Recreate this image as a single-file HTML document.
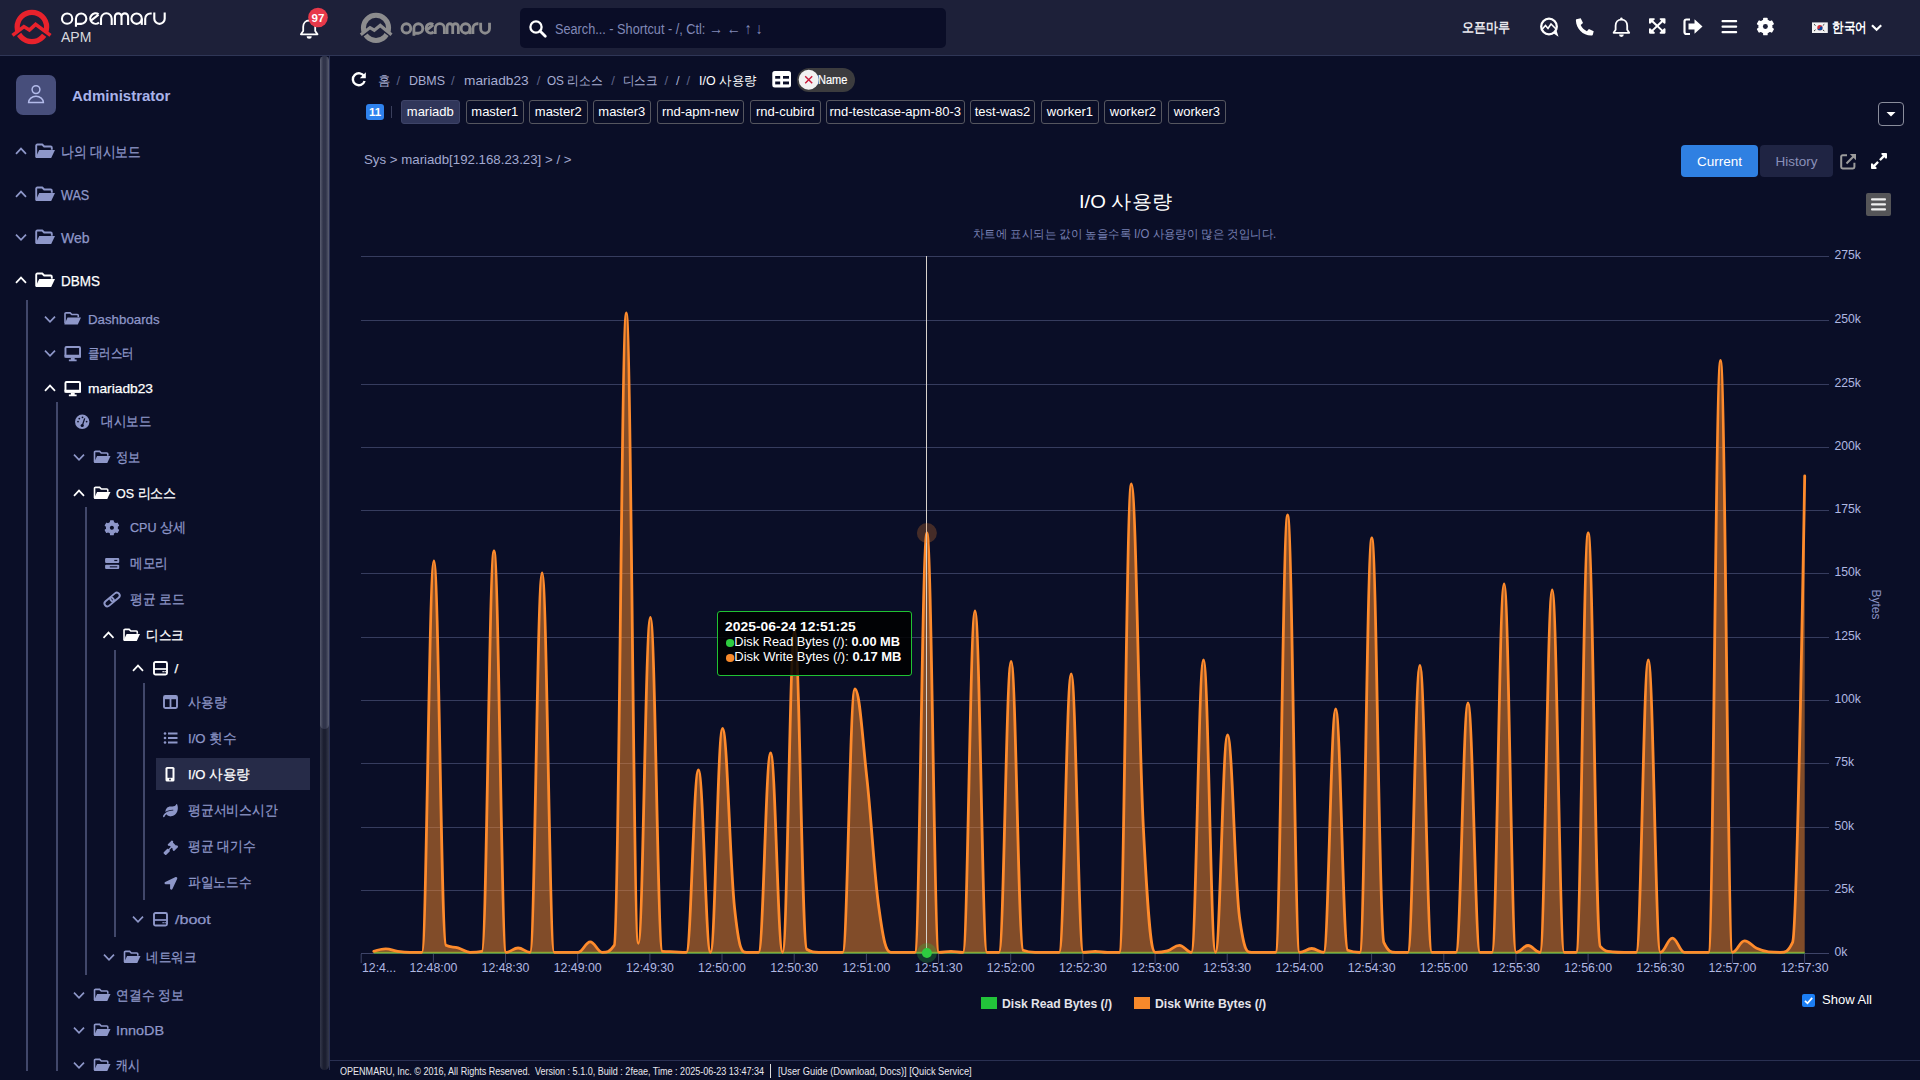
<!DOCTYPE html>
<html><head><meta charset="utf-8">
<style>
*{box-sizing:border-box}
html,body{margin:0;padding:0}
body{width:1920px;height:1080px;overflow:hidden;background:#0a0e27;font-family:"Liberation Sans",sans-serif;position:relative;color:#fff}
.a{position:absolute;white-space:nowrap}
#hdr{position:absolute;left:0;top:0;width:1920px;height:56px;background:#1d2039;border-bottom:1px solid #2f3656}
.t0{font-size:14.5px;color:#8e97c9;height:20px;line-height:20px}
.t1{font-size:13.5px;color:#8e97c9;height:20px;line-height:20px}
.w{color:#fff}
.vl{position:absolute;width:2px;background:#41476a}
.ic{position:absolute}
</style></head><body>
<!-- HEADER -->
<div id="hdr"></div>
<svg class="a" style="left:0;top:0" width="520" height="56" viewBox="0 0 520 56">
  <circle cx="31.9" cy="27" r="14.7" fill="none" stroke="#e8222c" stroke-width="5.3"/>
  <polyline points="11.5,38.6 23.9,28.6 29.4,32.6 35.6,27 51.5,38.6" fill="none" stroke="#1d2039" stroke-width="3.2"/>
  <polyline points="12.5,35.4 23.9,26.6 29.4,30.1 35.6,24.4 50.5,35.4" fill="none" stroke="#e8222c" stroke-width="3.6" stroke-linejoin="miter"/>
  <defs><g id="omtext">
    <circle cx="67.1" cy="18.65" r="5.15"/>
    <path d="M75.95 26.7 V18.65 A5.2 5.2 0 1 1 81.15 23.85 H77"/>
    <path d="M98.6 14.6 L90.6 20.8 M98.6 14.4 A5.2 5.2 0 1 0 99 22.4"/>
    <path d="M101 24.9 V18.65 A5.35 5.35 0 0 1 111.7 18.65 V24.9"/>
    <path d="M114.9 24.9 V16.7 A3.3 3.3 0 0 1 121.5 16.7 V24.9 M121.5 16.7 A3.3 3.3 0 0 1 128.1 16.7 V24.9"/>
    <circle cx="136.6" cy="18.65" r="5.2"/>
    <path d="M141.8 18.65 V24.9"/>
    <path d="M145.2 24.9 V18.65 A5.2 5.2 0 0 1 150.4 13.45 H151.7"/>
    <path d="M154.3 12.4 V18.65 A5.2 5.2 0 0 0 164.7 18.65 V12.4"/>
  </g></defs>
  <use href="#omtext" fill="none" stroke="#fff" stroke-width="2.1"/>
  <text x="61" y="41.5" font-family="Liberation Sans" font-size="14" fill="#d9d9de">APM</text>
  <!-- bell -->
  <path d="M309.2 20.5 c-3.6 0 -6 2.8 -6 6.3 v4.2 l-2.3 3.3 h16.6 l-2.3 -3.3 v-4.2 c0 -3.5 -2.4 -6.3 -6 -6.3z" fill="none" stroke="#fff" stroke-width="1.8" stroke-linejoin="round"/>
  <path d="M306.7 36.2 h5 a2.5 2.5 0 0 1 -5 0z" fill="#fff"/>
  <circle cx="318" cy="17.5" r="9.8" fill="#e8394a"/>
  <text x="318" y="21.6" font-family="Liberation Sans" font-size="11.5" font-weight="bold" fill="#fff" text-anchor="middle">97</text>
  <!-- gray logo -->
  <circle cx="376" cy="27.85" r="12.6" fill="none" stroke="#8c8c8e" stroke-width="5"/>
  <polyline points="359.5,37.6 370,30 374.3,32.4 380.2,27.8 392.8,37.4" fill="none" stroke="#1d2039" stroke-width="3"/>
  <polyline points="360.8,34.8 370,27.6 374.3,30.2 380.2,25.4 391.5,34.8" fill="none" stroke="#8c8c8e" stroke-width="3.2"/>
  <use href="#omtext" transform="translate(349.2 11.6) scale(0.852 0.904)" fill="none" stroke="#8c8c8e" stroke-width="3.3"/>
</svg>
<!-- search -->
<div class="a" style="left:520px;top:8px;width:426px;height:40px;background:#0a0d27;border-radius:5px"></div>
<svg class="a" style="left:528px;top:19px" width="20" height="20" viewBox="0 0 20 20"><circle cx="8" cy="8" r="5.6" fill="none" stroke="#fff" stroke-width="2.3"/><path d="M12 12 L17.3 17.3" stroke="#fff" stroke-width="2.8" stroke-linecap="round"/></svg>
<div id="t27" class="a" style="left:555px;top:19.0px;height:20px;line-height:20px;font-size:14px;color:#8189b7;transform:scaleX(0.9073);transform-origin:0 50%;">Search... - Shortcut - /, Ctl: <span style="font-size:15.5px">→ ← ↑ ↓</span></div><div id="t28" class="a" style="left:1462px;top:17.0px;height:20px;line-height:20px;font-size:14px;color:#e9e9ee;font-weight:bold;transform:scaleX(0.8571);transform-origin:0 50%;">오픈마루</div><div id="t29" class="a" style="left:1831.5px;top:17.0px;height:20px;line-height:20px;font-size:14px;color:#fff;font-weight:bold;transform:scaleX(0.8286);transform-origin:0 50%;">한국어</div>
<!-- header right icons -->
<svg class="a" style="left:1530px;top:10px" width="370" height="36" viewBox="1530 10 370 36">
  <g fill="#fff" stroke="#fff">
    <!-- chat openmaru -->
    <circle cx="1549" cy="26.5" r="7.8" fill="none" stroke-width="2.3"/>
    <path d="M1553 33 L1558.5 36.7 L1556.5 30.5z" stroke="none"/>
    <polyline points="1541.5,30 1545.5,25.5 1548,28.5 1551,24 1556.5,29.5" fill="none" stroke-width="1.6"/>
    <!-- phone -->
    <path d="M1577.5 19 l3.2 -0.8 l2.3 4.8 l-2.3 2 c1.2 2.8 3.5 5 6.2 6.2 l2 -2.3 l4.8 2.3 l-0.8 3.2 c-0.3 0.8 -1 1.2 -1.8 1.2 c-8.3 -0.3 -14.9 -7 -15.2 -15.2 c0 -0.8 0.5 -1.5 1.6 -1.4z" stroke="none"/>
    <!-- bell outline -->
    <path d="M1621.4 19.6 c-3.6 0 -5.8 2.8 -5.8 6.2 v4 l-2 3 h15.6 l-2 -3 v-4 c0 -3.4 -2.2 -6.2 -5.8 -6.2z" fill="none" stroke-width="1.8" stroke-linejoin="round"/>
    <path d="M1619 34.6 h4.8 a2.4 2.4 0 0 1 -4.8 0z" stroke="none"/>
    <circle cx="1621.4" cy="18.6" r="1.2" stroke="none"/>
    <!-- expand -->
    <path transform="translate(1649 18.2) scale(0.0368 0.0345) translate(0 -32)" d="M448 344v112a23.94 23.94 0 0 1-24 24H312c-21.39 0-32.09-25.9-17-41l36.2-36.2L224 295.6 116.77 402.9 153 439c15.09 15.1 4.39 41-17 41H24a23.94 23.94 0 0 1-24-24V344c0-21.4 25.89-32.1 41-17l36.19 36.2L184.46 256 77.18 148.7 41 185c-15.1 15.1-41 4.4-41-17V56a23.94 23.94 0 0 1 24-24h112c21.39 0 32.09 25.9 17 41l-36.2 36.2L224 216.4l107.23-107.3L295 73c-15.09-15.1-4.39-41 17-41h112a23.94 23.94 0 0 1 24 24v112c0 21.4-25.89 32.1-41 17l-36.19-36.2L263.54 256l107.28 107.3L407 327.1c15.1-15.2 41-4.5 41 16.9z" stroke="none"/>
    <!-- sign out -->
    <path d="M1690 19.5 h-3.5 a2 2 0 0 0 -2 2 v10.5 a2 2 0 0 0 2 2 h3.5" fill="none" stroke-width="2.2"/>
    <path d="M1688.5 23.5 h6 v-4.3 l8 7.3 l-8 7.3 v-4.3 h-6z" stroke="none"/>
    <!-- bars -->
    <rect x="1721.5" y="20" width="15.7" height="2.3" rx="1" stroke="none"/>
    <rect x="1721.5" y="25.4" width="15.7" height="2.3" rx="1" stroke="none"/>
    <rect x="1721.5" y="30.9" width="15.7" height="2.3" rx="1" stroke="none"/>
  </g>
  <!-- gear -->
  <g transform="translate(1765.4 26.5) scale(1.18)"><path d="M-2.41 -4.83 L-1.44 -5.20 L-1.32 -6.87 L1.32 -6.87 L1.44 -5.20 L2.98 -4.51 L3.79 -3.85 L5.29 -4.58 L6.61 -2.29 L5.23 -1.36 L5.39 0.32 L5.23 1.36 L6.61 2.29 L5.29 4.58 L3.79 3.85 L2.41 4.83 L1.44 5.20 L1.32 6.87 L-1.32 6.87 L-1.44 5.20 L-2.98 4.51 L-3.79 3.85 L-5.29 4.58 L-6.61 2.29 L-5.23 1.36 L-5.39 -0.32 L-5.23 -1.36 L-6.61 -2.29 L-5.29 -4.58 L-3.79 -3.85z M0 -2.1 a2.1 2.1 0 1 0 0.01 0z" fill="#fff" fill-rule="evenodd" stroke="#fff" stroke-width="1.2" stroke-linejoin="round"/><circle r="2.1" fill="#1d2039"/></g>
  <!-- flag -->
  <rect x="1812" y="22.4" width="15.8" height="10.6" fill="#f2f2f2"/>
  <circle cx="1819.9" cy="27.7" r="2.6" fill="#cd2e3a"/>
  <path d="M1817.3 27.7 a2.6 2.6 0 0 0 5.2 0 a1.3 1.3 0 0 0 -2.6 0 a1.3 1.3 0 0 1 -2.6 0z" fill="#0047a0"/>
  <g stroke="#333" stroke-width="1"><path d="M1814 24.3 l1.5 1.2 M1824.3 24.3 l-1.5 1.2 M1814 31 l1.5 -1.2 M1824.3 31 l-1.5 -1.2"/></g>
  <polyline points="1872,25.2 1876.6,29.8 1881.2,25.2" fill="none" stroke="#fff" stroke-width="2.2"/>
</svg>

<!-- SIDEBAR -->
<div class="a" style="left:320px;top:56px;width:9px;height:1014px;background:linear-gradient(to right,#34384b,#1b1e30 40%,#1b1e30 60%,#34384b);border-radius:5px"></div>
<div class="a" style="left:320px;top:56px;width:9px;height:673px;background:linear-gradient(to right,#5b5f72,#30344a 35%,#30344a 65%,#5b5f72);border-radius:5px"></div>
<div class="a" style="left:329px;top:56px;width:1px;height:1014px;background:#2a3052"></div>
<div class="vl" style="left:26px;top:300px;height:770.5px"></div><div class="vl" style="left:56px;top:402px;height:668.5px"></div><div class="vl" style="left:85.2px;top:507px;height:468px"></div><div class="vl" style="left:114px;top:650px;height:287px"></div><div class="vl" style="left:143px;top:683px;height:217px"></div><div class="a" style="left:156px;top:758px;width:154px;height:32px;background:#262b48"></div><div class="a" style="left:16px;top:75px;width:40px;height:40px;background:#474e7b;border-radius:7px"></div><svg class="a" style="left:16px;top:75px" width="40" height="40"><circle cx="20" cy="14.6" r="3.9" fill="none" stroke="#b3bbea" stroke-width="1.5"/><path d="M12.6 27.6 a7.4 6.4 0 0 1 14.8 0z" fill="none" stroke="#b3bbea" stroke-width="1.5"/></svg><div class="a" style="left:72px;top:86px;height:20px;line-height:20px;font-size:15px;font-weight:bold;color:#a9b3ea">Administrator</div><svg class="a" style="left:0;top:0" width="330" height="1080"><polyline points="16,153.8 21,148.6 26,153.8" fill="none" stroke="#8e97c9" stroke-width="1.7"/><g transform="translate(35 143.5) scale(1.0)"><path d="M1.2 13.5 V2.2 Q1.2 1 2.4 1 H7.2 L9.2 3 H15.6 Q16.8 3 16.8 4.2 V6.2" fill="none" stroke="#8e97c9" stroke-width="1.9"/><path d="M0.4 14.6 L4.2 6.6 H20 L16.2 14.6z" fill="#8e97c9"/></g><polyline points="16,196.8 21,191.6 26,196.8" fill="none" stroke="#8e97c9" stroke-width="1.7"/><g transform="translate(35 186.5) scale(1.0)"><path d="M1.2 13.5 V2.2 Q1.2 1 2.4 1 H7.2 L9.2 3 H15.6 Q16.8 3 16.8 4.2 V6.2" fill="none" stroke="#8e97c9" stroke-width="1.9"/><path d="M0.4 14.6 L4.2 6.6 H20 L16.2 14.6z" fill="#8e97c9"/></g><polyline points="16,234.6 21,239.8 26,234.6" fill="none" stroke="#8e97c9" stroke-width="1.7"/><g transform="translate(35 229.5) scale(1.0)"><path d="M1.2 13.5 V2.2 Q1.2 1 2.4 1 H7.2 L9.2 3 H15.6 Q16.8 3 16.8 4.2 V6.2" fill="none" stroke="#8e97c9" stroke-width="1.9"/><path d="M0.4 14.6 L4.2 6.6 H20 L16.2 14.6z" fill="#8e97c9"/></g><polyline points="16,282.8 21,277.6 26,282.8" fill="none" stroke="#fff" stroke-width="1.7"/><g transform="translate(35 272.5) scale(1.0)"><path d="M1.2 13.5 V2.2 Q1.2 1 2.4 1 H7.2 L9.2 3 H15.6 Q16.8 3 16.8 4.2 V6.2" fill="none" stroke="#fff" stroke-width="1.9"/><path d="M0.4 14.6 L4.2 6.6 H20 L16.2 14.6z" fill="#fff"/></g><polyline points="45,316.6 50,321.8 55,316.6" fill="none" stroke="#8e97c9" stroke-width="1.7"/><g transform="translate(64 312) scale(0.85)"><path d="M1.2 13.5 V2.2 Q1.2 1 2.4 1 H7.2 L9.2 3 H15.6 Q16.8 3 16.8 4.2 V6.2" fill="none" stroke="#8e97c9" stroke-width="1.9"/><path d="M0.4 14.6 L4.2 6.6 H20 L16.2 14.6z" fill="#8e97c9"/></g><polyline points="45,350.6 50,355.8 55,350.6" fill="none" stroke="#8e97c9" stroke-width="1.7"/><g transform="translate(64.5 346) scale(0.9705882352941176)"><rect x="1" y="1" width="15" height="10" rx="1" fill="none" stroke="#8e97c9" stroke-width="2"/><rect x="0" y="9" width="17" height="3" fill="#8e97c9"/><path d="M6.5 12 v2 h-2 v1.6 h8 v-1.6 h-2 v-2z" fill="#8e97c9"/></g><polyline points="45,390.8 50,385.6 55,390.8" fill="none" stroke="#fff" stroke-width="1.7"/><g transform="translate(64.5 381) scale(0.9705882352941176)"><rect x="1" y="1" width="15" height="10" rx="1" fill="none" stroke="#fff" stroke-width="2"/><rect x="0" y="9" width="17" height="3" fill="#fff"/><path d="M6.5 12 v2 h-2 v1.6 h8 v-1.6 h-2 v-2z" fill="#fff"/></g><g transform="translate(75 414.6)"><circle cx="7.2" cy="7.2" r="7.2" fill="#8e97c9"/><path d="M7.3 11 L9.7 3.8" stroke="#0a0e27" stroke-width="1.3"/><circle cx="7.2" cy="10.9" r="1.6" fill="#0a0e27"/><circle cx="4.3" cy="4" r="0.9" fill="#0a0e27"/><circle cx="7.5" cy="2.7" r="0.9" fill="#0a0e27"/><circle cx="3" cy="7" r="0.9" fill="#0a0e27"/><circle cx="11.6" cy="7" r="0.9" fill="#0a0e27"/></g><polyline points="74,454.6 79,459.8 84,454.6" fill="none" stroke="#8e97c9" stroke-width="1.7"/><g transform="translate(93.5 450.5) scale(0.85)"><path d="M1.2 13.5 V2.2 Q1.2 1 2.4 1 H7.2 L9.2 3 H15.6 Q16.8 3 16.8 4.2 V6.2" fill="none" stroke="#8e97c9" stroke-width="1.9"/><path d="M0.4 14.6 L4.2 6.6 H20 L16.2 14.6z" fill="#8e97c9"/></g><polyline points="74,495.8 79,490.6 84,495.8" fill="none" stroke="#fff" stroke-width="1.7"/><g transform="translate(93.5 486.5) scale(0.85)"><path d="M1.2 13.5 V2.2 Q1.2 1 2.4 1 H7.2 L9.2 3 H15.6 Q16.8 3 16.8 4.2 V6.2" fill="none" stroke="#fff" stroke-width="1.9"/><path d="M0.4 14.6 L4.2 6.6 H20 L16.2 14.6z" fill="#fff"/></g><g transform="translate(111.89999999999999 527.8000000000001)"><path d="M-2.41 -4.83 L-1.44 -5.20 L-1.32 -6.87 L1.32 -6.87 L1.44 -5.20 L2.98 -4.51 L3.79 -3.85 L5.29 -4.58 L6.61 -2.29 L5.23 -1.36 L5.39 0.32 L5.23 1.36 L6.61 2.29 L5.29 4.58 L3.79 3.85 L2.41 4.83 L1.44 5.20 L1.32 6.87 L-1.32 6.87 L-1.44 5.20 L-2.98 4.51 L-3.79 3.85 L-5.29 4.58 L-6.61 2.29 L-5.23 1.36 L-5.39 -0.32 L-5.23 -1.36 L-6.61 -2.29 L-5.29 -4.58 L-3.79 -3.85z M0 -2.1 a2.1 2.1 0 1 0 0.01 0z" fill="#8e97c9" fill-rule="evenodd" stroke="#8e97c9" stroke-width="1.2" stroke-linejoin="round"/><circle r="2" fill="#0a0e27"/></g><g transform="translate(104.8 555.5)"><rect x="0.3" y="2.6" width="14.1" height="4.9" rx="1" fill="#8e97c9"/><rect x="0.3" y="9.2" width="14.1" height="4.4" rx="1" fill="#8e97c9"/><rect x="9.5" y="4.4" width="3" height="1.2" fill="#0a0e27"/><rect x="5" y="10.8" width="7.5" height="1.1" fill="#0a0e27"/></g><g transform="translate(112.1 599.5) rotate(-40)" fill="none" stroke="#8e97c9" stroke-width="1.9"><rect x="-9" y="-2.9" width="10.5" height="5.8" rx="2.9"/><rect x="-1.5" y="-2.9" width="10.5" height="5.8" rx="2.9"/></g><polyline points="103.5,637.8 108.5,632.6 113.5,637.8" fill="none" stroke="#fff" stroke-width="1.7"/><g transform="translate(123 628.5) scale(0.85)"><path d="M1.2 13.5 V2.2 Q1.2 1 2.4 1 H7.2 L9.2 3 H15.6 Q16.8 3 16.8 4.2 V6.2" fill="none" stroke="#fff" stroke-width="1.9"/><path d="M0.4 14.6 L4.2 6.6 H20 L16.2 14.6z" fill="#fff"/></g><polyline points="133,670.8 138,665.6 143,670.8" fill="none" stroke="#fff" stroke-width="1.7"/><g transform="translate(153 661)"><rect x="1" y="1" width="13" height="12.5" rx="1.5" fill="none" stroke="#fff" stroke-width="1.9"/><path d="M1 8 H14" stroke="#fff" stroke-width="1.7"/><rect x="9.5" y="10" width="1.3" height="1.3" fill="#fff"/><rect x="11.5" y="10" width="1.3" height="1.3" fill="#fff"/></g><g transform="translate(163 695)"><rect x="1" y="1" width="13" height="12" rx="1.2" fill="none" stroke="#8e97c9" stroke-width="1.9"/><rect x="1" y="1" width="13" height="3.2" fill="#8e97c9"/><path d="M7.5 3 V13" stroke="#8e97c9" stroke-width="1.8"/></g><g transform="translate(163.5 730.5)" fill="#8e97c9"><circle cx="1.5" cy="3" r="1.3"/><circle cx="1.5" cy="7.5" r="1.3"/><circle cx="1.5" cy="12" r="1.3"/><rect x="4.5" y="2" width="9.5" height="2"/><rect x="4.5" y="6.5" width="9.5" height="2"/><rect x="4.5" y="11" width="9.5" height="2"/></g><g transform="translate(162.5 766.5)"><rect x="3" y="0.5" width="9" height="14.5" rx="1.6" fill="#fff"/><rect x="5" y="2.3" width="5" height="9" fill="#262b48"/><circle cx="7.5" cy="13" r="0.9" fill="#262b48"/></g><g transform="translate(163 804.0) scale(0.0258)"><path d="M546.2 9.7c-5.6-12.5-21.6-13-28.3-1.2C486.9 62.4 431.4 96 368 96h-80C182 96 96 182 96 288c0 7 .8 13.7 1.5 20.5C161.3 262.8 253.4 224 384 224c8.8 0 16 7.2 16 16s-7.2 16-16 16C132.6 256 26 410.1 2.4 468c-6.6 16.3 1.2 34.9 17.5 41.6 16.4 6.8 35-1.1 41.8-17.3 1.5-3.6 20.9-47.9 71.9-90.6 32.4 43.9 94 85.8 174.9 77.2C465.5 467.5 576 326.7 576 154.3c0-50.2-10.8-102.2-29.8-144.6z" fill="#8e97c9"/></g><g transform="translate(163.5 840.5) scale(0.0285)"><path d="M504.971 199.362l-22.627-22.627c-9.373-9.373-24.569-9.373-33.941 0l-5.657 5.657L329.608 69.255l5.657-5.657c9.373-9.373 9.373-24.569 0-33.941L312.638 7.029c-9.373-9.373-24.569-9.373-33.941 0L154.246 131.48c-9.373 9.373-9.373 24.569 0 33.941l22.627 22.627c9.373 9.373 24.569 9.373 33.941 0l5.657-5.657 39.598 39.598-81.04 81.04-5.657-5.657c-12.497-12.497-32.758-12.497-45.255 0L9.373 412.118c-12.497 12.497-12.497 32.758 0 45.255l45.255 45.255c12.497 12.497 32.758 12.497 45.255 0l114.745-114.745c12.497-12.497 12.497-32.758 0-45.255l-5.657-5.657 81.04-81.04 39.598 39.598-5.657 5.657c-9.373 9.373-9.373 24.569 0 33.941l22.627 22.627c9.373 9.373 24.569 9.373 33.941 0l124.451-124.451c9.372-9.372 9.372-24.568 0-33.941z" fill="#8e97c9"/></g><g transform="translate(164.5 877.0) scale(0.025)"><path d="M444.52 3.52L28.74 195.42c-47.97 22.39-31.98 92.75 19.19 92.75h175.91v175.91c0 51.17 70.36 67.17 92.75 19.19l191.9-415.78c15.99-38.39-25.59-79.97-63.97-63.97z" fill="#8e97c9"/></g><polyline points="133,916.6 138,921.8 143,916.6" fill="none" stroke="#8e97c9" stroke-width="1.7"/><g transform="translate(153 912)"><rect x="1" y="1" width="13" height="12.5" rx="1.5" fill="none" stroke="#8e97c9" stroke-width="1.9"/><path d="M1 8 H14" stroke="#8e97c9" stroke-width="1.7"/><rect x="9.5" y="10" width="1.3" height="1.3" fill="#8e97c9"/><rect x="11.5" y="10" width="1.3" height="1.3" fill="#8e97c9"/></g><polyline points="104,954.6 109,959.8 114,954.6" fill="none" stroke="#8e97c9" stroke-width="1.7"/><g transform="translate(123.5 950.5) scale(0.85)"><path d="M1.2 13.5 V2.2 Q1.2 1 2.4 1 H7.2 L9.2 3 H15.6 Q16.8 3 16.8 4.2 V6.2" fill="none" stroke="#8e97c9" stroke-width="1.9"/><path d="M0.4 14.6 L4.2 6.6 H20 L16.2 14.6z" fill="#8e97c9"/></g><polyline points="74,992.6 79,997.8 84,992.6" fill="none" stroke="#8e97c9" stroke-width="1.7"/><g transform="translate(93.5 988.5) scale(0.85)"><path d="M1.2 13.5 V2.2 Q1.2 1 2.4 1 H7.2 L9.2 3 H15.6 Q16.8 3 16.8 4.2 V6.2" fill="none" stroke="#8e97c9" stroke-width="1.9"/><path d="M0.4 14.6 L4.2 6.6 H20 L16.2 14.6z" fill="#8e97c9"/></g><polyline points="74,1027.6 79,1032.8 84,1027.6" fill="none" stroke="#8e97c9" stroke-width="1.7"/><g transform="translate(93.5 1023.5) scale(0.85)"><path d="M1.2 13.5 V2.2 Q1.2 1 2.4 1 H7.2 L9.2 3 H15.6 Q16.8 3 16.8 4.2 V6.2" fill="none" stroke="#8e97c9" stroke-width="1.9"/><path d="M0.4 14.6 L4.2 6.6 H20 L16.2 14.6z" fill="#8e97c9"/></g><polyline points="74,1062.6 79,1067.8 84,1062.6" fill="none" stroke="#8e97c9" stroke-width="1.7"/><g transform="translate(93.5 1058.5) scale(0.85)"><path d="M1.2 13.5 V2.2 Q1.2 1 2.4 1 H7.2 L9.2 3 H15.6 Q16.8 3 16.8 4.2 V6.2" fill="none" stroke="#8e97c9" stroke-width="1.9"/><path d="M0.4 14.6 L4.2 6.6 H20 L16.2 14.6z" fill="#8e97c9"/></g></svg><div id="t1" class="a" style="left:61px;top:142.0px;height:20px;line-height:20px;font-size:14.5px;color:#8e97c9;transform:scaleX(0.8476);transform-origin:0 50%;-webkit-text-stroke:0.25px #8e97c9;">나의 대시보드</div><div id="t2" class="a" style="left:61px;top:185.0px;height:20px;line-height:20px;font-size:14.5px;color:#8e97c9;transform:scaleX(0.8708);transform-origin:0 50%;-webkit-text-stroke:0.25px #8e97c9;">WAS</div><div id="t3" class="a" style="left:61px;top:228.0px;height:20px;line-height:20px;font-size:14.5px;color:#8e97c9;transform:scaleX(0.9674);transform-origin:0 50%;-webkit-text-stroke:0.25px #8e97c9;">Web</div><div id="t4" class="a" style="left:61px;top:271.0px;height:20px;line-height:20px;font-size:14.5px;color:#fff;transform:scaleX(0.9283);transform-origin:0 50%;-webkit-text-stroke:0.25px #fff;">DBMS</div><div id="t5" class="a" style="left:87.5px;top:310.0px;height:20px;line-height:20px;font-size:13.5px;color:#8e97c9;transform:scaleX(0.9836);transform-origin:0 50%;-webkit-text-stroke:0.25px #8e97c9;">Dashboards</div><div id="t6" class="a" style="left:87.5px;top:344.0px;height:20px;line-height:20px;font-size:13.5px;color:#8e97c9;transform:scaleX(0.8161);transform-origin:0 50%;-webkit-text-stroke:0.25px #8e97c9;">클러스터</div><div id="t7" class="a" style="left:87.5px;top:379.0px;height:20px;line-height:20px;font-size:13.5px;color:#fff;transform:scaleX(1.0189);transform-origin:0 50%;-webkit-text-stroke:0.25px #fff;">mariadb23</div><div id="t8" class="a" style="left:100.5px;top:412.0px;height:20px;line-height:20px;font-size:13.5px;color:#8e97c9;transform:scaleX(0.8929);transform-origin:0 50%;-webkit-text-stroke:0.25px #8e97c9;">대시보드</div><div id="t9" class="a" style="left:116px;top:448.0px;height:20px;line-height:20px;font-size:13.5px;color:#8e97c9;transform:scaleX(0.8750);transform-origin:0 50%;-webkit-text-stroke:0.25px #8e97c9;">정보</div><div id="t10" class="a" style="left:116px;top:484.0px;height:20px;line-height:20px;font-size:13.5px;color:#fff;transform:scaleX(0.9254);transform-origin:0 50%;-webkit-text-stroke:0.25px #fff;">OS 리소스</div><div id="t11" class="a" style="left:130px;top:518.0px;height:20px;line-height:20px;font-size:13.5px;color:#8e97c9;transform:scaleX(0.9309);transform-origin:0 50%;-webkit-text-stroke:0.25px #8e97c9;">CPU 상세</div><div id="t12" class="a" style="left:130px;top:554.0px;height:20px;line-height:20px;font-size:13.5px;color:#8e97c9;transform:scaleX(0.9000);transform-origin:0 50%;-webkit-text-stroke:0.25px #8e97c9;">메모리</div><div id="t13" class="a" style="left:130px;top:590.0px;height:20px;line-height:20px;font-size:13.5px;color:#8e97c9;transform:scaleX(0.9119);transform-origin:0 50%;-webkit-text-stroke:0.25px #8e97c9;">평균 로드</div><div id="t14" class="a" style="left:145.5px;top:626.0px;height:20px;line-height:20px;font-size:13.5px;color:#fff;transform:scaleX(0.8929);transform-origin:0 50%;-webkit-text-stroke:0.25px #fff;">디스크</div><div id="t15" class="a" style="left:174.5px;top:659.0px;height:20px;line-height:20px;font-size:13.5px;color:#fff;-webkit-text-stroke:0.25px #fff;">/</div><div id="t16" class="a" style="left:188px;top:693.0px;height:20px;line-height:20px;font-size:13.5px;color:#8e97c9;transform:scaleX(0.9143);transform-origin:0 50%;-webkit-text-stroke:0.25px #8e97c9;">사용량</div><div id="t17" class="a" style="left:188px;top:729.0px;height:20px;line-height:20px;font-size:13.5px;color:#8e97c9;transform:scaleX(0.9726);transform-origin:0 50%;-webkit-text-stroke:0.25px #8e97c9;">I/O 횟수</div><div id="t18" class="a" style="left:188px;top:765.0px;height:20px;line-height:20px;font-size:13.5px;color:#fff;transform:scaleX(0.9676);transform-origin:0 50%;-webkit-text-stroke:0.25px #fff;">I/O 사용량</div><div id="t19" class="a" style="left:188px;top:801.0px;height:20px;line-height:20px;font-size:13.5px;color:#8e97c9;transform:scaleX(0.9153);transform-origin:0 50%;-webkit-text-stroke:0.25px #8e97c9;">평균서비스시간</div><div id="t20" class="a" style="left:188px;top:837.0px;height:20px;line-height:20px;font-size:13.5px;color:#8e97c9;transform:scaleX(0.9151);transform-origin:0 50%;-webkit-text-stroke:0.25px #8e97c9;">평균 대기수</div><div id="t21" class="a" style="left:188px;top:873.0px;height:20px;line-height:20px;font-size:13.5px;color:#8e97c9;transform:scaleX(0.9057);transform-origin:0 50%;-webkit-text-stroke:0.25px #8e97c9;">파일노드수</div><div id="t22" class="a" style="left:174.5px;top:910.0px;height:20px;line-height:20px;font-size:13.5px;color:#8e97c9;transform:scaleX(1.1921);transform-origin:0 50%;-webkit-text-stroke:0.25px #8e97c9;">/boot</div><div id="t23" class="a" style="left:145.5px;top:948.0px;height:20px;line-height:20px;font-size:13.5px;color:#8e97c9;transform:scaleX(0.8929);transform-origin:0 50%;-webkit-text-stroke:0.25px #8e97c9;">네트워크</div><div id="t24" class="a" style="left:116px;top:986.0px;height:20px;line-height:20px;font-size:13.5px;color:#8e97c9;transform:scaleX(0.9123);transform-origin:0 50%;-webkit-text-stroke:0.25px #8e97c9;">연결수 정보</div><div id="t25" class="a" style="left:116px;top:1021.0px;height:20px;line-height:20px;font-size:13.5px;color:#8e97c9;transform:scaleX(1.0704);transform-origin:0 50%;-webkit-text-stroke:0.25px #8e97c9;">InnoDB</div><div id="t26" class="a" style="left:116px;top:1056.0px;height:20px;line-height:20px;font-size:13.5px;color:#8e97c9;transform:scaleX(0.8607);transform-origin:0 50%;-webkit-text-stroke:0.25px #8e97c9;">캐시</div>

<!-- MAIN -->
<!-- breadcrumb -->
<svg class="a" style="left:350px;top:70px" width="18" height="18" viewBox="0 0 18 18"><path d="M14.2 6.5 A6 6 0 1 0 14.6 11" fill="none" stroke="#fff" stroke-width="2.4"/><path d="M15.8 2.2 V8.2 H9.8z" fill="#fff"/></svg>
<svg class="a" style="left:772px;top:70px" width="20" height="18" viewBox="0 0 20 18"><rect x="0.3" y="0.9" width="18.7" height="16.6" rx="2.5" fill="#fff"/><rect x="3.2" y="6" width="5" height="2.7" fill="#0a0e27"/><rect x="11" y="6" width="6" height="2.7" fill="#0a0e27"/><rect x="3.2" y="11.5" width="5" height="2.9" fill="#0a0e27"/><rect x="11" y="11.5" width="6" height="2.9" fill="#0a0e27"/></svg>
<div class="a" style="left:797.3px;top:68px;width:57.5px;height:24px;border-radius:12px;background:#3c3c3e"></div>
<svg class="a" style="left:797px;top:68px;z-index:5" width="24" height="24" viewBox="0 0 24 24"><circle cx="11.7" cy="11.7" r="10" fill="#f2f2f2"/><path d="M8.2 8.2 L15.2 15.2 M15.2 8.2 L8.2 15.2" stroke="#c8193a" stroke-width="1.4"/></svg>
<!-- tags -->
<div class="a" style="left:366px;top:104px;width:18px;height:16px;border-radius:3px;background:#2f82ee"></div>
<div class="a" style="left:390.5px;top:106px;width:1px;height:12px;background:#3a3f5c"></div>
<div class="a" style="left:401px;top:100px;width:58.6px;height:24px;border:1px solid;background:#30365a;border-color:#3e4468;border-radius:3px;color:#fff;font-size:13px;line-height:22px;text-align:center">mariadb</div><div class="a" style="left:465.8px;top:100px;width:58.0px;height:24px;border:1px solid;border-color:#55565f;border-radius:3px;color:#fff;font-size:13px;line-height:22px;text-align:center">master1</div><div class="a" style="left:529px;top:100px;width:58.6px;height:24px;border:1px solid;border-color:#55565f;border-radius:3px;color:#fff;font-size:13px;line-height:22px;text-align:center">master2</div><div class="a" style="left:593px;top:100px;width:57.6px;height:24px;border:1px solid;border-color:#55565f;border-radius:3px;color:#fff;font-size:13px;line-height:22px;text-align:center">master3</div><div class="a" style="left:656.8px;top:100px;width:86.9px;height:24px;border:1px solid;border-color:#55565f;border-radius:3px;color:#fff;font-size:13px;line-height:22px;text-align:center">rnd-apm-new</div><div class="a" style="left:749.9px;top:100px;width:70.8px;height:24px;border:1px solid;border-color:#55565f;border-radius:3px;color:#fff;font-size:13px;line-height:22px;text-align:center">rnd-cubird</div><div class="a" style="left:825.8px;top:100px;width:138.8px;height:24px;border:1px solid;border-color:#55565f;border-radius:3px;color:#fff;font-size:13px;line-height:22px;text-align:center">rnd-testcase-apm-80-3</div><div class="a" style="left:970.3px;top:100px;width:64.4px;height:24px;border:1px solid;border-color:#55565f;border-radius:3px;color:#fff;font-size:13px;line-height:22px;text-align:center">test-was2</div><div class="a" style="left:1041.2px;top:100px;width:57.6px;height:24px;border:1px solid;border-color:#55565f;border-radius:3px;color:#fff;font-size:13px;line-height:22px;text-align:center">worker1</div><div class="a" style="left:1104.2px;top:100px;width:57.4px;height:24px;border:1px solid;border-color:#55565f;border-radius:3px;color:#fff;font-size:13px;line-height:22px;text-align:center">worker2</div><div class="a" style="left:1168.3px;top:100px;width:57.4px;height:24px;border:1px solid;border-color:#55565f;border-radius:3px;color:#fff;font-size:13px;line-height:22px;text-align:center">worker3</div>
<div class="a" style="left:1878px;top:102px;width:26px;height:24px;border:1px solid #8a8d9c;border-radius:4px"></div>
<svg class="a" style="left:1878px;top:102px" width="26" height="24"><path d="M8.5 10 H17.5 L13 14.6z" fill="#fff"/></svg>
<!-- sys path -->
<!-- buttons -->
<div class="a" style="left:1681px;top:145px;width:77px;height:32px;border-radius:4px;background:#2f80e2"></div>
<div class="a" style="left:1760px;top:145px;width:73px;height:32px;border-radius:4px;background:#1f2443"></div>
<svg class="a" style="left:1840px;top:153px" width="17" height="17" viewBox="0 0 17 17"><path d="M7 2.2 H2.6 a1.4 1.4 0 0 0 -1.4 1.4 V14 a1.4 1.4 0 0 0 1.4 1.4 H13 a1.4 1.4 0 0 0 1.4 -1.4 V9.8" fill="none" stroke="#9c9c9c" stroke-width="2"/><path d="M6.5 10.5 L14.2 2.8" stroke="#9c9c9c" stroke-width="2"/><path d="M9.8 1 H16 V7.2z" fill="#9c9c9c"/></svg>
<svg class="a" style="left:1871.3px;top:153px" width="16" height="16" viewBox="0 32 448 448"><path d="M212.686 315.314L120 408l32.922 31.029c15.12 15.12 4.412 40.971-16.97 40.971h-112C10.697 480 0 469.255 0 456V344c0-21.382 25.803-32.09 40.922-16.971L72 360l92.686-92.686c6.248-6.248 16.379-6.248 22.627 0l25.373 25.373c6.249 6.248 6.249 16.378 0 22.627zm22.628-118.628L328 104l-32.922-31.029C279.958 57.851 290.666 32 312.048 32h112C437.303 32 448 42.745 448 56v112c0 21.382-25.803 32.09-40.922 16.971L376 152l-92.686 92.686c-6.248 6.248-16.379 6.248-22.627 0l-25.373-25.373c-6.249-6.248-6.249-16.378 0-22.627z" fill="#fff"/></svg>
<!-- chart -->
<div class="a" style="left:1866px;top:193px;width:25px;height:22.5px;border-radius:2px;background:#555558"></div>
<svg class="a" style="left:1866px;top:193px" width="25" height="23"><g fill="#f0f0f0"><rect x="5" y="5.2" width="15" height="2.4" rx="1"/><rect x="5" y="10.2" width="15" height="2.4" rx="1"/><rect x="5" y="15.2" width="15" height="2.4" rx="1"/></g></svg>
<svg class="a" style="left:0;top:0" width="1920" height="1080" viewBox="0 0 1920 1080">
  <g stroke="#363c5e" stroke-width="1">
    <path d="M361 256.5 H1829"/><path d="M361 320.5 H1829"/><path d="M361 384.5 H1829"/><path d="M361 447.5 H1829"/><path d="M361 510.5 H1829"/><path d="M361 573.5 H1829"/><path d="M361 637.5 H1829"/><path d="M361 700.5 H1829"/><path d="M361 763.5 H1829"/><path d="M361 827.5 H1829"/><path d="M361 890.5 H1829"/>
  </g>
  <path d="M361 953.5 H1829" stroke="#3e4468" stroke-width="1"/>
  <path d="M361.2 954 V963" stroke="#3e4468" stroke-width="1"/><path d="M433.4 954 V963" stroke="#3e4468" stroke-width="1"/><path d="M505.5 954 V963" stroke="#3e4468" stroke-width="1"/><path d="M577.7 954 V963" stroke="#3e4468" stroke-width="1"/><path d="M649.9 954 V963" stroke="#3e4468" stroke-width="1"/><path d="M722.0 954 V963" stroke="#3e4468" stroke-width="1"/><path d="M794.2 954 V963" stroke="#3e4468" stroke-width="1"/><path d="M866.4 954 V963" stroke="#3e4468" stroke-width="1"/><path d="M938.6 954 V963" stroke="#3e4468" stroke-width="1"/><path d="M1010.7 954 V963" stroke="#3e4468" stroke-width="1"/><path d="M1082.9 954 V963" stroke="#3e4468" stroke-width="1"/><path d="M1155.1 954 V963" stroke="#3e4468" stroke-width="1"/><path d="M1227.2 954 V963" stroke="#3e4468" stroke-width="1"/><path d="M1299.4 954 V963" stroke="#3e4468" stroke-width="1"/><path d="M1371.6 954 V963" stroke="#3e4468" stroke-width="1"/><path d="M1443.8 954 V963" stroke="#3e4468" stroke-width="1"/><path d="M1515.9 954 V963" stroke="#3e4468" stroke-width="1"/><path d="M1588.1 954 V963" stroke="#3e4468" stroke-width="1"/><path d="M1660.3 954 V963" stroke="#3e4468" stroke-width="1"/><path d="M1732.4 954 V963" stroke="#3e4468" stroke-width="1"/><path d="M1804.6 954 V963" stroke="#3e4468" stroke-width="1"/>
  <path d="M373.8 952.6 H1804.7" stroke="#22c33a" stroke-width="1.6"/>
  <path d="M 373.8 951.3 C 373.8 951.3 381 948.8 385.8 948.8 C 390.6 948.8 393 950.6 397.8 951.3 C 402.7 952 405.1 952.3 409.9 952.3 C 414.7 952.3 417.1 952.3 421.9 952.3 C 426.7 952.3 429.1 561 433.9 561 C 438.7 561 441.1 942.8 445.9 945.3 C 450.8 947.8 453.2 946.4 458 947.8 C 462.8 949.2 465.2 952.3 470 952.3 C 474.8 952.3 477.2 952.3 482 951.3 C 486.8 950.3 489.2 551 494 551 C 498.8 551 501.3 952.3 506.1 952.3 C 510.9 952.3 513.3 948 518.1 948 C 522.9 948 525.3 952.3 530.1 952.3 C 534.9 952.3 537.3 573 542.1 573 C 546.9 573 549.4 952.3 554.2 952.3 C 559 952.3 561.4 952.3 566.2 952.3 C 571 952.3 573.4 952.3 578.2 952.3 C 583 952.3 585.4 941.8 590.2 941.8 C 595 941.8 597.4 952.3 602.3 952.3 C 607.1 952.3 609.5 952.3 614.3 945.3 C 619.1 938.3 621.5 313 626.3 313 C 631.1 313 633.5 943.3 638.3 943.3 C 643.1 943.3 645.5 617.5 650.4 617.5 C 655.2 617.5 657.6 950.8 662.4 951.3 C 667.2 951.8 669.6 951.6 674.4 951.8 C 679.2 952 681.6 952.3 686.4 952.3 C 691.2 952.3 693.6 770 698.4 770 C 703.3 770 705.7 952.3 710.5 952.3 C 715.3 952.3 717.7 728.5 722.5 728.5 C 727.3 728.5 729.7 862.5 734.5 907.3 C 739.3 952.1 741.7 952.3 746.5 952.3 C 751.4 952.3 753.8 952.3 758.6 952.3 C 763.4 952.3 765.8 753 770.6 753 C 775.4 753 777.8 952.3 782.6 952.3 C 787.4 952.3 789.8 631 794.6 631 C 799.4 631 801.9 946.3 806.7 949.3 C 811.5 952.3 813.9 952.3 818.7 952.3 C 823.5 952.3 825.9 952.3 830.7 952.3 C 835.5 952.3 837.9 952.3 842.7 952.3 C 847.5 952.3 850 689 854.8 689 C 859.6 689 862 733.6 866.8 777.3 C 871.6 821 874 872.3 878.8 907.3 C 883.6 942.3 886 952.3 890.8 952.3 C 895.6 952.3 898 952.3 902.9 952.3 C 907.7 952.3 910.1 952.3 914.9 952.3 C 919.7 952.3 922.1 533 926.9 533 C 931.7 533 934.1 952.3 938.9 952.3 C 943.7 952.3 946.1 951.3 951 951.3 C 955.8 951.3 958.2 952.3 963 952.3 C 967.8 952.3 970.2 611 975 611 C 979.8 611 982.2 952.3 987 952.3 C 991.8 952.3 994.2 952.3 999 952.3 C 1003.9 952.3 1006.3 661.5 1011.1 661.5 C 1015.9 661.5 1018.3 948.3 1023.1 950.3 C 1027.9 952.3 1030.3 952.3 1035.1 952.3 C 1039.9 952.3 1042.3 952.3 1047.1 952.3 C 1052 952.3 1054.4 952.3 1059.2 952.3 C 1064 952.3 1066.4 674 1071.2 674 C 1076 674 1078.4 952.3 1083.2 952.3 C 1088 952.3 1090.4 951.3 1095.2 951.3 C 1100 951.3 1102.5 952.3 1107.3 952.3 C 1112.1 952.3 1114.5 952.3 1119.3 952.3 C 1124.1 952.3 1126.5 484 1131.3 484 C 1136.1 484 1138.5 732.6 1143.3 826.3 C 1148.1 920 1150.6 952.3 1155.4 952.3 C 1160.2 952.3 1162.6 952.2 1167.4 950.8 C 1172.2 949.4 1174.6 945.3 1179.4 945.3 C 1184.2 945.3 1186.6 952.3 1191.4 952.3 C 1196.2 952.3 1198.6 660 1203.5 660 C 1208.3 660 1210.7 952.3 1215.5 952.3 C 1220.3 952.3 1222.7 735 1227.5 735 C 1232.3 735 1234.7 882.3 1239.5 917.3 C 1244.3 952.3 1246.7 952.3 1251.6 952.3 C 1256.4 952.3 1258.8 952.3 1263.6 952.3 C 1268.4 952.3 1270.8 952.3 1275.6 952.3 C 1280.4 952.3 1282.8 515 1287.6 515 C 1292.4 515 1294.8 952.3 1299.6 952.3 C 1304.5 952.3 1306.9 948.5 1311.7 948.5 C 1316.5 948.5 1318.9 952.3 1323.7 952.3 C 1328.5 952.3 1330.9 709 1335.7 709 C 1340.5 709 1342.9 948.3 1347.7 950.3 C 1352.6 952.3 1355 952.3 1359.8 952.3 C 1364.6 952.3 1367 538 1371.8 538 C 1376.6 538 1379 932.3 1383.8 942.3 C 1388.6 952.3 1391 952.3 1395.8 952.3 C 1400.6 952.3 1403.1 952.3 1407.9 952.3 C 1412.7 952.3 1415.1 665.5 1419.9 665.5 C 1424.7 665.5 1427.1 952.3 1431.9 952.3 C 1436.7 952.3 1439.1 952.3 1443.9 952.3 C 1448.7 952.3 1451.2 952.3 1456 952.3 C 1460.8 952.3 1463.2 703 1468 703 C 1472.8 703 1475.2 952.3 1480 952.3 C 1484.8 952.3 1487.2 952.3 1492 952.3 C 1496.8 952.3 1499.2 584 1504.1 584 C 1508.9 584 1511.3 952.3 1516.1 952.3 C 1520.9 952.3 1523.3 945.5 1528.1 945.5 C 1532.9 945.5 1535.3 952.3 1540.1 952.3 C 1544.9 952.3 1547.3 590 1552.2 590 C 1557 590 1559.4 952.3 1564.2 952.3 C 1569 952.3 1571.4 952.3 1576.2 952.3 C 1581 952.3 1583.4 533 1588.2 533 C 1593 533 1595.4 940.8 1600.2 946.3 C 1605.1 951.8 1607.5 951.3 1612.3 951.8 C 1617.1 952.3 1619.5 952.3 1624.3 952.3 C 1629.1 952.3 1631.5 952.3 1636.3 952.3 C 1641.1 952.3 1643.5 660 1648.3 660 C 1653.2 660 1655.6 952.3 1660.4 952.3 C 1665.2 952.3 1667.6 938.1 1672.4 938.1 C 1677.2 938.1 1679.6 952.3 1684.4 952.3 C 1689.2 952.3 1691.6 952.3 1696.4 952.3 C 1701.2 952.3 1703.7 952.3 1708.5 952.3 C 1713.3 952.3 1715.7 360.5 1720.5 360.5 C 1725.3 360.5 1727.7 952.3 1732.5 952.3 C 1737.3 952.3 1739.7 940.8 1744.5 940.8 C 1749.3 940.8 1751.8 946.1 1756.6 948.3 C 1761.4 950.5 1763.8 951.3 1768.6 951.8 C 1773.4 952.3 1775.8 952.3 1780.6 952.3 C 1785.4 952.3 1787.8 952.3 1792.6 942.3 C 1797.4 932.3 1804.7 476 1804.7 476 L 1804.7 953.2 L 373.8 953.2 Z" fill="#f7892b" fill-opacity="0.5"/>
  <path d="M 373.8 951.3 C 373.8 951.3 381 948.8 385.8 948.8 C 390.6 948.8 393 950.6 397.8 951.3 C 402.7 952 405.1 952.3 409.9 952.3 C 414.7 952.3 417.1 952.3 421.9 952.3 C 426.7 952.3 429.1 561 433.9 561 C 438.7 561 441.1 942.8 445.9 945.3 C 450.8 947.8 453.2 946.4 458 947.8 C 462.8 949.2 465.2 952.3 470 952.3 C 474.8 952.3 477.2 952.3 482 951.3 C 486.8 950.3 489.2 551 494 551 C 498.8 551 501.3 952.3 506.1 952.3 C 510.9 952.3 513.3 948 518.1 948 C 522.9 948 525.3 952.3 530.1 952.3 C 534.9 952.3 537.3 573 542.1 573 C 546.9 573 549.4 952.3 554.2 952.3 C 559 952.3 561.4 952.3 566.2 952.3 C 571 952.3 573.4 952.3 578.2 952.3 C 583 952.3 585.4 941.8 590.2 941.8 C 595 941.8 597.4 952.3 602.3 952.3 C 607.1 952.3 609.5 952.3 614.3 945.3 C 619.1 938.3 621.5 313 626.3 313 C 631.1 313 633.5 943.3 638.3 943.3 C 643.1 943.3 645.5 617.5 650.4 617.5 C 655.2 617.5 657.6 950.8 662.4 951.3 C 667.2 951.8 669.6 951.6 674.4 951.8 C 679.2 952 681.6 952.3 686.4 952.3 C 691.2 952.3 693.6 770 698.4 770 C 703.3 770 705.7 952.3 710.5 952.3 C 715.3 952.3 717.7 728.5 722.5 728.5 C 727.3 728.5 729.7 862.5 734.5 907.3 C 739.3 952.1 741.7 952.3 746.5 952.3 C 751.4 952.3 753.8 952.3 758.6 952.3 C 763.4 952.3 765.8 753 770.6 753 C 775.4 753 777.8 952.3 782.6 952.3 C 787.4 952.3 789.8 631 794.6 631 C 799.4 631 801.9 946.3 806.7 949.3 C 811.5 952.3 813.9 952.3 818.7 952.3 C 823.5 952.3 825.9 952.3 830.7 952.3 C 835.5 952.3 837.9 952.3 842.7 952.3 C 847.5 952.3 850 689 854.8 689 C 859.6 689 862 733.6 866.8 777.3 C 871.6 821 874 872.3 878.8 907.3 C 883.6 942.3 886 952.3 890.8 952.3 C 895.6 952.3 898 952.3 902.9 952.3 C 907.7 952.3 910.1 952.3 914.9 952.3 C 919.7 952.3 922.1 533 926.9 533 C 931.7 533 934.1 952.3 938.9 952.3 C 943.7 952.3 946.1 951.3 951 951.3 C 955.8 951.3 958.2 952.3 963 952.3 C 967.8 952.3 970.2 611 975 611 C 979.8 611 982.2 952.3 987 952.3 C 991.8 952.3 994.2 952.3 999 952.3 C 1003.9 952.3 1006.3 661.5 1011.1 661.5 C 1015.9 661.5 1018.3 948.3 1023.1 950.3 C 1027.9 952.3 1030.3 952.3 1035.1 952.3 C 1039.9 952.3 1042.3 952.3 1047.1 952.3 C 1052 952.3 1054.4 952.3 1059.2 952.3 C 1064 952.3 1066.4 674 1071.2 674 C 1076 674 1078.4 952.3 1083.2 952.3 C 1088 952.3 1090.4 951.3 1095.2 951.3 C 1100 951.3 1102.5 952.3 1107.3 952.3 C 1112.1 952.3 1114.5 952.3 1119.3 952.3 C 1124.1 952.3 1126.5 484 1131.3 484 C 1136.1 484 1138.5 732.6 1143.3 826.3 C 1148.1 920 1150.6 952.3 1155.4 952.3 C 1160.2 952.3 1162.6 952.2 1167.4 950.8 C 1172.2 949.4 1174.6 945.3 1179.4 945.3 C 1184.2 945.3 1186.6 952.3 1191.4 952.3 C 1196.2 952.3 1198.6 660 1203.5 660 C 1208.3 660 1210.7 952.3 1215.5 952.3 C 1220.3 952.3 1222.7 735 1227.5 735 C 1232.3 735 1234.7 882.3 1239.5 917.3 C 1244.3 952.3 1246.7 952.3 1251.6 952.3 C 1256.4 952.3 1258.8 952.3 1263.6 952.3 C 1268.4 952.3 1270.8 952.3 1275.6 952.3 C 1280.4 952.3 1282.8 515 1287.6 515 C 1292.4 515 1294.8 952.3 1299.6 952.3 C 1304.5 952.3 1306.9 948.5 1311.7 948.5 C 1316.5 948.5 1318.9 952.3 1323.7 952.3 C 1328.5 952.3 1330.9 709 1335.7 709 C 1340.5 709 1342.9 948.3 1347.7 950.3 C 1352.6 952.3 1355 952.3 1359.8 952.3 C 1364.6 952.3 1367 538 1371.8 538 C 1376.6 538 1379 932.3 1383.8 942.3 C 1388.6 952.3 1391 952.3 1395.8 952.3 C 1400.6 952.3 1403.1 952.3 1407.9 952.3 C 1412.7 952.3 1415.1 665.5 1419.9 665.5 C 1424.7 665.5 1427.1 952.3 1431.9 952.3 C 1436.7 952.3 1439.1 952.3 1443.9 952.3 C 1448.7 952.3 1451.2 952.3 1456 952.3 C 1460.8 952.3 1463.2 703 1468 703 C 1472.8 703 1475.2 952.3 1480 952.3 C 1484.8 952.3 1487.2 952.3 1492 952.3 C 1496.8 952.3 1499.2 584 1504.1 584 C 1508.9 584 1511.3 952.3 1516.1 952.3 C 1520.9 952.3 1523.3 945.5 1528.1 945.5 C 1532.9 945.5 1535.3 952.3 1540.1 952.3 C 1544.9 952.3 1547.3 590 1552.2 590 C 1557 590 1559.4 952.3 1564.2 952.3 C 1569 952.3 1571.4 952.3 1576.2 952.3 C 1581 952.3 1583.4 533 1588.2 533 C 1593 533 1595.4 940.8 1600.2 946.3 C 1605.1 951.8 1607.5 951.3 1612.3 951.8 C 1617.1 952.3 1619.5 952.3 1624.3 952.3 C 1629.1 952.3 1631.5 952.3 1636.3 952.3 C 1641.1 952.3 1643.5 660 1648.3 660 C 1653.2 660 1655.6 952.3 1660.4 952.3 C 1665.2 952.3 1667.6 938.1 1672.4 938.1 C 1677.2 938.1 1679.6 952.3 1684.4 952.3 C 1689.2 952.3 1691.6 952.3 1696.4 952.3 C 1701.2 952.3 1703.7 952.3 1708.5 952.3 C 1713.3 952.3 1715.7 360.5 1720.5 360.5 C 1725.3 360.5 1727.7 952.3 1732.5 952.3 C 1737.3 952.3 1739.7 940.8 1744.5 940.8 C 1749.3 940.8 1751.8 946.1 1756.6 948.3 C 1761.4 950.5 1763.8 951.3 1768.6 951.8 C 1773.4 952.3 1775.8 952.3 1780.6 952.3 C 1785.4 952.3 1787.8 952.3 1792.6 942.3 C 1797.4 932.3 1804.7 476 1804.7 476" fill="none" stroke="#ff8b2c" stroke-width="2.8" stroke-linejoin="round" stroke-linecap="round"/>
  <path d="M926.5 256 V953" stroke="#d8d2cc" stroke-width="1"/>
  <circle cx="926.9" cy="533" r="10" fill="#f7892b" fill-opacity="0.25"/>
  <circle cx="926.9" cy="953" r="10" fill="#2ecc40" fill-opacity="0.25"/>
  <circle cx="926.9" cy="953" r="5" fill="#2ecc40"/>
  <g font-family="Liberation Sans" font-size="11" fill="#b0b8e2">
    <text x="1834.5" y="258.6" font-size="12.2">275k</text><text x="1834.5" y="322.6" font-size="12.2">250k</text><text x="1834.5" y="386.6" font-size="12.2">225k</text><text x="1834.5" y="449.6" font-size="12.2">200k</text><text x="1834.5" y="512.6" font-size="12.2">175k</text><text x="1834.5" y="575.6" font-size="12.2">150k</text><text x="1834.5" y="639.6" font-size="12.2">125k</text><text x="1834.5" y="702.6" font-size="12.2">100k</text><text x="1834.5" y="765.6" font-size="12.2">75k</text><text x="1834.5" y="829.6" font-size="12.2">50k</text><text x="1834.5" y="892.6" font-size="12.2">25k</text><text x="1834.5" y="955.6" font-size="12.2">0k</text>
    <text x="362" y="972" font-size="12.3">12:4...</text><text x="433.4" y="972" text-anchor="middle" font-size="12.3">12:48:00</text><text x="505.5" y="972" text-anchor="middle" font-size="12.3">12:48:30</text><text x="577.7" y="972" text-anchor="middle" font-size="12.3">12:49:00</text><text x="649.9" y="972" text-anchor="middle" font-size="12.3">12:49:30</text><text x="722.0" y="972" text-anchor="middle" font-size="12.3">12:50:00</text><text x="794.2" y="972" text-anchor="middle" font-size="12.3">12:50:30</text><text x="866.4" y="972" text-anchor="middle" font-size="12.3">12:51:00</text><text x="938.6" y="972" text-anchor="middle" font-size="12.3">12:51:30</text><text x="1010.7" y="972" text-anchor="middle" font-size="12.3">12:52:00</text><text x="1082.9" y="972" text-anchor="middle" font-size="12.3">12:52:30</text><text x="1155.1" y="972" text-anchor="middle" font-size="12.3">12:53:00</text><text x="1227.2" y="972" text-anchor="middle" font-size="12.3">12:53:30</text><text x="1299.4" y="972" text-anchor="middle" font-size="12.3">12:54:00</text><text x="1371.6" y="972" text-anchor="middle" font-size="12.3">12:54:30</text><text x="1443.8" y="972" text-anchor="middle" font-size="12.3">12:55:00</text><text x="1515.9" y="972" text-anchor="middle" font-size="12.3">12:55:30</text><text x="1588.1" y="972" text-anchor="middle" font-size="12.3">12:56:00</text><text x="1660.3" y="972" text-anchor="middle" font-size="12.3">12:56:30</text><text x="1732.4" y="972" text-anchor="middle" font-size="12.3">12:57:00</text><text x="1804.6" y="972" text-anchor="middle" font-size="12.3">12:57:30</text>
  </g>
  <text transform="translate(1871.5 604.5) rotate(90)" font-family="Liberation Sans" font-size="12" fill="#8890c2" text-anchor="middle">Bytes</text>
</svg>
<!-- tooltip -->
<div class="a" style="left:717px;top:611px;width:195px;height:65px;border:1.5px solid #20c233;border-radius:3px;background:rgba(0,0,0,0.85)"></div>
<!-- legend -->
<div class="a" style="left:981px;top:997px;width:16px;height:12px;background:#22c33a"></div>
<div class="a" style="left:1134px;top:997px;width:16px;height:12px;background:#f7892b"></div>
<div class="a" style="left:1802px;top:994px;width:13px;height:13px;border-radius:2px;background:#1c7ef4"></div>
<svg class="a" style="left:1802px;top:994px" width="13" height="13"><path d="M3 6.8 L5.5 9.3 L10.2 3.8" fill="none" stroke="#fff" stroke-width="1.8"/></svg>
<!-- footer -->
<div id="t30" class="a" style="left:377.8px;top:70.5px;height:20px;line-height:20px;font-size:13px;color:#a7add2;transform:scaleX(0.9615);transform-origin:0 50%;">홈</div><div id="t31" class="a" style="left:396.6px;top:70.5px;height:20px;line-height:20px;font-size:13px;color:#5d6388;">/</div><div id="t32" class="a" style="left:408.7px;top:70.5px;height:20px;line-height:20px;font-size:13px;color:#a7add2;transform:scaleX(0.9584);transform-origin:0 50%;">DBMS</div><div id="t33" class="a" style="left:451px;top:70.5px;height:20px;line-height:20px;font-size:13px;color:#5d6388;">/</div><div id="t34" class="a" style="left:463.6px;top:70.5px;height:20px;line-height:20px;font-size:13px;color:#a7add2;transform:scaleX(1.0531);transform-origin:0 50%;">mariadb23</div><div id="t35" class="a" style="left:536.7px;top:70.5px;height:20px;line-height:20px;font-size:13px;color:#5d6388;">/</div><div id="t36" class="a" style="left:547.4px;top:70.5px;height:20px;line-height:20px;font-size:13px;color:#a7add2;transform:scaleX(0.9022);transform-origin:0 50%;">OS 리소스</div><div id="t37" class="a" style="left:611.2px;top:70.5px;height:20px;line-height:20px;font-size:13px;color:#5d6388;">/</div><div id="t38" class="a" style="left:622.5px;top:70.5px;height:20px;line-height:20px;font-size:13px;color:#a7add2;transform:scaleX(0.8846);transform-origin:0 50%;">디스크</div><div id="t39" class="a" style="left:664.6px;top:70.5px;height:20px;line-height:20px;font-size:13px;color:#5d6388;">/</div><div id="t40" class="a" style="left:675.9px;top:70.5px;height:20px;line-height:20px;font-size:13px;color:#a7add2;">/</div><div id="t41" class="a" style="left:686.6px;top:70.5px;height:20px;line-height:20px;font-size:13px;color:#5d6388;">/</div><div id="t42" class="a" style="left:699.2px;top:70.5px;height:20px;line-height:20px;font-size:13px;color:#fff;transform:scaleX(0.9574);transform-origin:0 50%;">I/O 사용량</div><div id="t43" class="a" style="left:818px;top:69.8px;height:20px;line-height:20px;font-size:12.5px;color:#fff;transform:scaleX(0.8817);transform-origin:0 50%;-webkit-text-stroke:0.2px #fff;">Name</div><div id="t44" class="a" style="left:366px;top:102.3px;height:20px;line-height:20px;font-size:11.5px;color:#fff;font-weight:bold;width:18px;text-align:center;">11</div><div id="t45" class="a" style="left:364.3px;top:149.5px;height:20px;line-height:20px;font-size:13px;color:#a2a9d0;transform:scaleX(1.0199);transform-origin:0 50%;">Sys &gt; mariadb[192.168.23.23] &gt; / &gt;</div><div id="t46" class="a" style="left:1681px;top:151.5px;height:20px;line-height:20px;font-size:13.5px;color:#fff;width:77px;text-align:center;">Current</div><div id="t47" class="a" style="left:1760px;top:151.5px;height:20px;line-height:20px;font-size:13.5px;color:#8990b9;width:73px;text-align:center;">History</div><div id="t48" class="a" style="left:1078.7px;top:189.5px;height:24px;line-height:24px;font-size:19px;color:#fff;transform:scaleX(1.0591);transform-origin:0 50%;">I/O 사용량</div><div id="t49" class="a" style="left:973.3px;top:225.5px;height:16px;line-height:16px;font-size:12px;color:#7880b3;transform:scaleX(0.9514);transform-origin:0 50%;">차트에 표시되는 값이 높을수록 I/O 사용량이 많은 것입니다.</div><div id="t50" class="a" style="left:725.3px;top:618.5px;height:16px;line-height:16px;font-size:13.5px;color:#fff;font-weight:bold;transform:scaleX(1.0303);transform-origin:0 50%;">2025-06-24 12:51:25</div><div id="t51" class="a" style="left:726px;top:634.0px;height:16px;line-height:16px;font-size:12.5px;color:#fff;transform:scaleX(1.0243);transform-origin:0 50%;"><span style="display:inline-block;width:7.5px;height:7.5px;border-radius:50%;background:#2ecc40;vertical-align:-0.5px;margin-right:0.5px"></span>Disk Read Bytes (/): <b>0.00 MB</b></div><div id="t52" class="a" style="left:726px;top:649.0px;height:16px;line-height:16px;font-size:12.5px;color:#fff;transform:scaleX(1.0389);transform-origin:0 50%;"><span style="display:inline-block;width:7.5px;height:7.5px;border-radius:50%;background:#f7892b;vertical-align:-0.5px;margin-right:0.5px"></span>Disk Write Bytes (/): <b>0.17 MB</b></div><div id="t53" class="a" style="left:1002px;top:995.5px;height:16px;line-height:16px;font-size:12.5px;color:#e4e4ea;font-weight:bold;transform:scaleX(0.9714);transform-origin:0 50%;">Disk Read Bytes (/)</div><div id="t54" class="a" style="left:1154.8px;top:995.5px;height:16px;line-height:16px;font-size:12.5px;color:#e4e4ea;font-weight:bold;transform:scaleX(0.9780);transform-origin:0 50%;">Disk Write Bytes (/)</div><div id="t55" class="a" style="left:1821.8px;top:990.5px;height:18px;line-height:18px;font-size:13px;color:#fff;transform:scaleX(1.0025);transform-origin:0 50%;">Show All</div><div id="t56" class="a" style="left:340.3px;top:1064.5px;height:14px;line-height:14px;font-size:10px;color:#e8e8ee;transform:scaleX(0.9035);transform-origin:0 50%;">OPENMARU, Inc. © 2016, All Rights Reserved.&nbsp; Version : 5.1.0, Build : 2feae, Time : 2025-06-23 13:47:34</div><div id="t57" class="a" style="left:777.9px;top:1064.5px;height:14px;line-height:14px;font-size:10px;color:#e8e8ee;transform:scaleX(0.9294);transform-origin:0 50%;">[User Guide (Download, Docs)] [Quick Service]</div>
<div class="a" style="left:330px;top:1060px;width:1590px;height:1px;background:#2a3052"></div>
<div class="a" style="left:770px;top:1064px;width:1px;height:14px;background:#ddd"></div>

</body></html>
